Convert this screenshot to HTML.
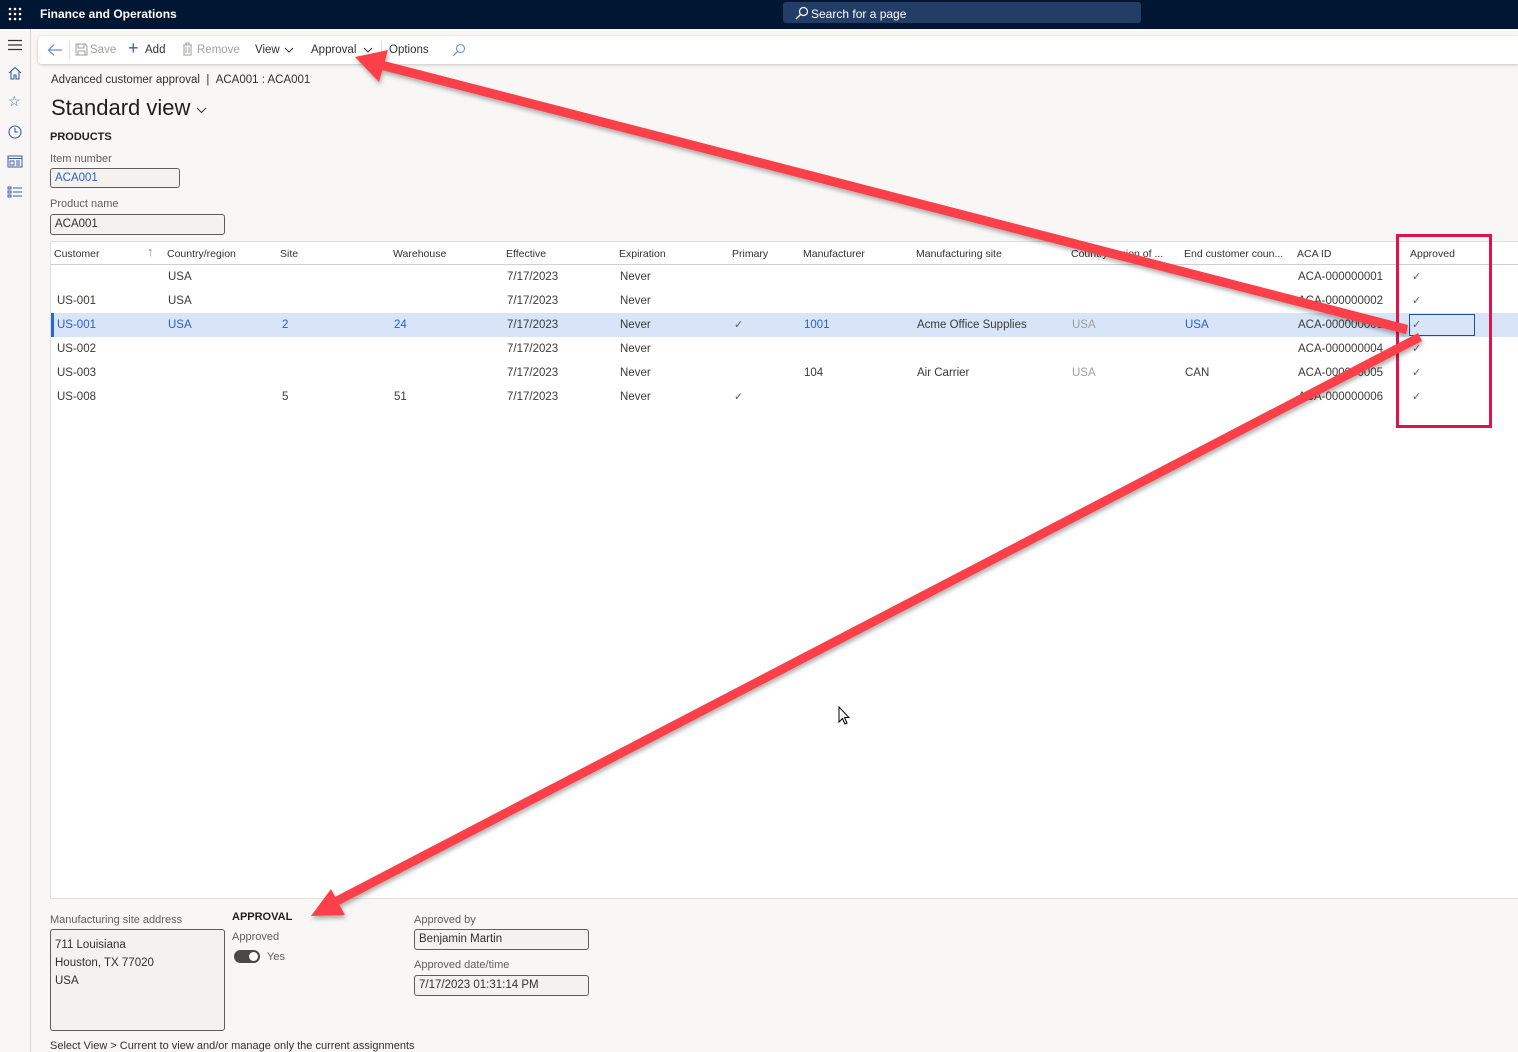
<!DOCTYPE html>
<html><head><meta charset="utf-8">
<style>
*{box-sizing:border-box;margin:0;padding:0}
body{width:1518px;height:1052px;overflow:hidden;background:#f8f7f6;font-family:"Liberation Sans",sans-serif;font-size:11.5px;color:#323130;position:relative}
.a{position:absolute;white-space:nowrap}
.top{position:absolute;left:0;top:0;width:1518px;height:29px;background:#001633}
.nav{position:absolute;left:0;top:29px;width:31px;height:1023px;background:#f8f7f6;border-right:1px solid #d6d4d2}
.tb{position:absolute;left:38px;top:36px;width:1480px;height:28px;background:#fff;border-radius:4px 0 0 4px;box-shadow:0 1px 3px rgba(0,0,0,.2)}
.inp{position:absolute;border:1px solid #605e5c;border-radius:3px;background:#f3f2f1;padding-left:4px;line-height:18px;font-size:11.5px}
.grid{position:absolute;left:50px;top:241px;width:1468px;height:658px;background:#fff;border:1px solid #e1dfdd;border-right:none}
.hdr{position:absolute;left:0;top:0;width:100%;height:23px;border-bottom:1px solid #d2d0ce;font-size:10.5px;color:#323130}
.row{position:absolute;left:0;width:100%;height:24px;line-height:24px;font-size:11.5px;color:#3b3a39}
.sel{background:#d8e4f8;color:#2b5fc2}
.sel:before{content:"";position:absolute;left:0;top:0;width:3px;height:24px;background:#2b66d9}
.ck{color:#605e5c;font-size:11px}
</style></head><body>
<div class="top">
 <svg class="a" style="left:8px;top:7px" width="14" height="14"><g fill="#fff"><circle cx="2" cy="2" r="1.3"/><circle cx="7" cy="2" r="1.3"/><circle cx="12" cy="2" r="1.3"/><circle cx="2" cy="7" r="1.3"/><circle cx="7" cy="7" r="1.3"/><circle cx="12" cy="7" r="1.3"/><circle cx="2" cy="12" r="1.3"/><circle cx="7" cy="12" r="1.3"/><circle cx="12" cy="12" r="1.3"/></g></svg>
 <div class="a" style="left:40px;top:7px;color:#fff;font-weight:bold;font-size:12px">Finance and Operations</div>
 <div class="a" style="left:783px;top:2px;width:358px;height:21px;background:#233e66;border-radius:3px"></div>
 <svg class="a" style="left:795px;top:6px" width="14" height="14"><circle cx="8.5" cy="5.5" r="4" fill="none" stroke="#fff" stroke-width="1.2"/><line x1="5.5" y1="8.5" x2="1" y2="13" stroke="#fff" stroke-width="1.3"/></svg>
 <div class="a" style="left:811px;top:7px;color:#fff;font-size:12px">Search for a page</div>
</div>
<div class="nav">
 <svg class="a" style="left:7px;top:10px" width="16" height="12"><path d="M1 1.5H15M1 6H15M1 10.5H15" stroke="#323130" stroke-width="1.2"/></svg>
 <svg class="a" style="left:8px;top:37px" width="14" height="14"><path d="M1 7L7 1.5 13 7M3 5.5V13H6V9H8V13H11V5.5" fill="none" stroke="#3b5fa8" stroke-width="1.1"/></svg>
 <div class="a" style="left:8px;top:64px;font-size:14px;color:#3b5fa8">☆</div>
 <svg class="a" style="left:8px;top:96px" width="14" height="14"><circle cx="7" cy="7" r="6" fill="none" stroke="#3b5fa8" stroke-width="1.1"/><path d="M7 3V7H10" fill="none" stroke="#3b5fa8" stroke-width="1.1"/></svg>
 <svg class="a" style="left:7px;top:126px" width="16" height="13"><rect x="1" y="1" width="14" height="11" fill="none" stroke="#3b5fa8"/><path d="M1 3.5H15M3 6H7V10H3ZM9 6H13M9 8H13M9 10H13" fill="none" stroke="#3b5fa8" stroke-width=".9"/></svg>
 <svg class="a" style="left:7px;top:156px" width="16" height="14"><path d="M1 2H4V4H1ZM1 6H4V8H1ZM1 10H4V12H1ZM6 3H15M6 7H15M6 11H15" fill="none" stroke="#3b5fa8" stroke-width="1"/></svg>
</div>
<div class="tb">
 <svg class="a" style="left:9px;top:7px" width="16" height="14"><path d="M15 7H2M7 1.5L1.5 7 7 12.5" fill="none" stroke="#6b8ad6" stroke-width="1.2"/></svg>
 <div class="a" style="left:31px;top:5px;width:1px;height:18px;background:#e1dfdd"></div>
 <svg class="a" style="left:37px;top:7px" width="13" height="13"><path d="M1 1H10L12 3V12H1Z M3 1V5H9V1 M3 12V8H10V12" fill="none" stroke="#a19f9d" stroke-width="1"/></svg>
 <div class="a" style="left:52px;top:8px;color:#a19f9d">Save</div>
 <div class="a" style="left:90px;top:2px;font-size:18px;color:#3b5fa8;font-weight:300">+</div>
 <div class="a" style="left:107px;top:8px;color:#323130">Add</div>
 <svg class="a" style="left:144px;top:6px" width="11" height="14"><path d="M1 3H10M4 3V1H7V3M2 3V13H9V3M4 5V11M7 5V11" fill="none" stroke="#a19f9d"/></svg>
 <div class="a" style="left:159px;top:8px;color:#a19f9d">Remove</div>
 <div class="a" style="left:217px;top:8px">View</div>
 <svg class="a" style="left:246px;top:11px" width="10" height="6"><path d="M1 1L5 5 9 1" fill="none" stroke="#323130"/></svg>
 <div class="a" style="left:273px;top:8px">Approval</div>
 <svg class="a" style="left:325px;top:11px" width="10" height="6"><path d="M1 1L5 5 9 1" fill="none" stroke="#323130"/></svg>
 <div class="a" style="left:343px;top:5px;width:1px;height:18px;background:#e1dfdd"></div>
 <div class="a" style="left:351px;top:8px">Options</div>
 <svg class="a" style="left:414px;top:7px" width="14" height="14"><circle cx="8.5" cy="5.5" r="4" fill="none" stroke="#6b8ad6" stroke-width="1.1"/><line x1="5.5" y1="8.5" x2="1" y2="13" stroke="#6b8ad6" stroke-width="1.2"/></svg>
</div>
<div class="a" style="left:51px;top:74px;font-size:11.5px">Advanced customer approval &nbsp;| &nbsp;ACA001 : ACA001</div>
<div class="a" style="left:51px;top:95px;font-size:22px;color:#201f1e">Standard view</div>
<svg class="a" style="left:196px;top:107px" width="11" height="7"><path d="M1 1L5.5 5.5 10 1" fill="none" stroke="#323130"/></svg>
<div class="a" style="left:50px;top:131px;font-size:11px;font-weight:bold;color:#201f1e">PRODUCTS</div>
<div class="a" style="left:50px;top:153px;font-size:11px;color:#605e5c">Item number</div>
<div class="inp" style="left:50px;top:168px;width:130px;height:20px;color:#2b5fc2">ACA001</div>
<div class="a" style="left:50px;top:198px;font-size:11px;color:#605e5c">Product name</div>
<div class="inp" style="left:50px;top:214px;width:175px;height:21px">ACA001</div>

<div class="grid">
 <div class="hdr">
  <span class="a" style="left:3px;top:6px">Customer</span>
  <span class="a" style="left:96px;top:2px;color:#8a8886;font-size:13px">↑</span>
  <span class="a" style="left:116px;top:6px">Country/region</span>
  <span class="a" style="left:229px;top:6px">Site</span>
  <span class="a" style="left:342px;top:6px">Warehouse</span>
  <span class="a" style="left:455px;top:6px">Effective</span>
  <span class="a" style="left:568px;top:6px">Expiration</span>
  <span class="a" style="left:681px;top:6px">Primary</span>
  <span class="a" style="left:752px;top:6px">Manufacturer</span>
  <span class="a" style="left:865px;top:6px">Manufacturing site</span>
  <span class="a" style="left:1020px;top:6px">Country/region of ...</span>
  <span class="a" style="left:1133px;top:6px">End customer coun...</span>
  <span class="a" style="left:1246px;top:6px">ACA ID</span>
  <span class="a" style="left:1359px;top:6px">Approved</span>
 </div>
 <div class="row" style="top:23px"><span class="a" style="left:117px">USA</span><span class="a" style="left:456px">7/17/2023</span><span class="a" style="left:569px">Never</span><span class="a" style="left:1247px">ACA-000000001</span><span class="a ck" style="left:1361px">✓</span></div>
 <div class="row" style="top:47px"><span class="a" style="left:6px">US-001</span><span class="a" style="left:117px">USA</span><span class="a" style="left:456px">7/17/2023</span><span class="a" style="left:569px">Never</span><span class="a" style="left:1247px">ACA-000000002</span><span class="a ck" style="left:1361px">✓</span></div>
 <div class="row sel" style="top:71px"><span class="a" style="left:6px">US-001</span><span class="a" style="left:117px">USA</span><span class="a" style="left:231px">2</span><span class="a" style="left:343px">24</span><span class="a" style="left:456px;color:#3b3a39">7/17/2023</span><span class="a" style="left:569px;color:#3b3a39">Never</span><span class="a ck" style="left:683px">✓</span><span class="a" style="left:753px">1001</span><span class="a" style="left:866px;color:#3b3a39">Acme Office Supplies</span><span class="a" style="left:1021px;color:#a19f9d">USA</span><span class="a" style="left:1134px">USA</span><span class="a" style="left:1247px;color:#3b3a39">ACA-000000003</span><div class="a" style="left:1358px;top:1px;width:66px;height:22px;border:1px solid #1f4e9a"></div><span class="a ck" style="left:1361px">✓</span></div>
 <div class="row" style="top:95px"><span class="a" style="left:6px">US-002</span><span class="a" style="left:456px">7/17/2023</span><span class="a" style="left:569px">Never</span><span class="a" style="left:1247px">ACA-000000004</span><span class="a ck" style="left:1361px">✓</span></div>
 <div class="row" style="top:119px"><span class="a" style="left:6px">US-003</span><span class="a" style="left:456px">7/17/2023</span><span class="a" style="left:569px">Never</span><span class="a" style="left:753px">104</span><span class="a" style="left:866px">Air Carrier</span><span class="a" style="left:1021px;color:#a19f9d">USA</span><span class="a" style="left:1134px">CAN</span><span class="a" style="left:1247px">ACA-000000005</span><span class="a ck" style="left:1361px">✓</span></div>
 <div class="row" style="top:143px"><span class="a" style="left:6px">US-008</span><span class="a" style="left:231px">5</span><span class="a" style="left:343px">51</span><span class="a" style="left:456px">7/17/2023</span><span class="a" style="left:569px">Never</span><span class="a ck" style="left:683px">✓</span><span class="a" style="left:1247px">ACA-000000006</span><span class="a ck" style="left:1361px">✓</span></div>
</div>

<div class="a" style="left:50px;top:914px;font-size:11px;color:#605e5c">Manufacturing site address</div>
<div class="inp" style="left:50px;top:929px;width:175px;height:102px;line-height:18px;padding-top:6px">711 Louisiana<br>Houston, TX 77020<br>USA</div>
<div class="a" style="left:232px;top:911px;font-size:11px;font-weight:bold;color:#201f1e">APPROVAL</div>
<div class="a" style="left:232px;top:931px;font-size:11px;color:#605e5c">Approved</div>
<div class="a" style="left:234px;top:950px;width:26px;height:13px;border-radius:7px;background:#4a4948"></div>
<div class="a" style="left:249px;top:952px;width:9px;height:9px;border-radius:50%;background:#fff"></div>
<div class="a" style="left:267px;top:951px;font-size:11px;color:#605e5c">Yes</div>
<div class="a" style="left:414px;top:914px;font-size:11px;color:#605e5c">Approved by</div>
<div class="inp" style="left:414px;top:929px;width:175px;height:21px">Benjamin Martin</div>
<div class="a" style="left:414px;top:959px;font-size:11px;color:#605e5c">Approved date/time</div>
<div class="inp" style="left:414px;top:975px;width:175px;height:21px">7/17/2023 01:31:14 PM</div>
<div class="a" style="left:50px;top:1040px;font-size:11px">Select View &gt; Current to view and/or manage only the current assignments</div>

<div class="a" style="left:1396px;top:234px;width:96px;height:194px;border:3px solid #e0134a"></div>

<svg class="a" style="left:0;top:0" width="1518" height="1052">
 <defs><filter id="s"><feDropShadow dx="1" dy="3" stdDeviation="2" flood-color="#000" flood-opacity=".3"/></filter></defs>
 <g fill="#fb4048" filter="url(#s)">
  <polygon points="1408,325 1406,334 382,70 384,61"/>
  <polygon points="355,57 388,50 379,82"/>
  <polygon points="1418,333 1422,341 337,906 333,898"/>
  <polygon points="311,916 331,889 345,915"/>
 </g>
</svg>
<svg class="a" style="left:838px;top:706px" width="12" height="20"><path d="M1 1V16L4.5 12.5 7 18 9 17 6.5 11.5H11Z" fill="#fff" stroke="#000" stroke-width="1"/></svg>
</body></html>
